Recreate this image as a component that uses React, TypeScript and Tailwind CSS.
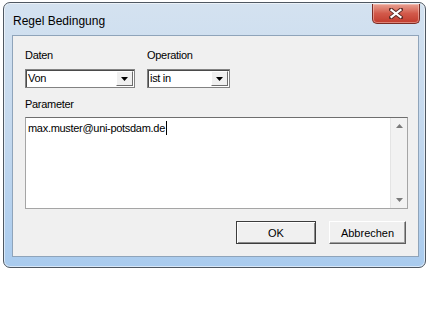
import React from 'react'

const Combo = ({ value, width }: { value: string; width: string }) => {
  return (
    <div className={`${width} h-[19px] flex bg-white border border-[#828282] shadow-[inset_1px_1px_0_#4a4a4a]`}>
      <span className="flex-1 pl-[2px] pt-[1px] text-[11px] leading-[15px] tracking-[-0.3px] text-black">{value}</span>
      <div className="w-[17px] h-[15px] mt-[1px] mr-[1px] flex items-center justify-center bg-[#f0f0f0] border border-t-white border-l-white border-r-[#6d6d6d] border-b-[#6d6d6d]">
        <svg width="7" height="4" viewBox="0 0 7 4">
          <path d="M0 0 H7 L3.5 4 Z" fill="#000" />
        </svg>
      </div>
    </div>
  )
}

const App = () => {
  return (
    <div
      className="w-[430px] h-[323px] bg-white pt-[2px] pl-[3px]"
      style={{ fontFamily: '"Liberation Sans", Arial, sans-serif' }}
    >
      {/* window frame */}
      <div className="w-[423px] h-[266px] rounded-[7px] border border-[#4f5862] bg-gradient-to-b from-[#d4e2f0] via-[#c3d8ee] to-[#a9cbee] shadow-[inset_0_0_0_1px_rgba(255,255,255,0.55)] flex flex-col">
        {/* title bar */}
        <div className="h-[32px] flex items-start justify-between pl-[9px] pr-[5px]">
          <span className="mt-[11px] text-[12px] leading-[14px] text-black">Regel Bedingung</span>
          <div className="w-[48px] h-[20px] mt-[1px] rounded-b-[5px] border border-t-0 border-[#7a2c24] bg-gradient-to-b from-[#e8a193] via-[#d2594a] to-[#c13a2c] shadow-[inset_0_0_0_1px_rgba(255,220,210,0.45)] flex items-center justify-center">
            <svg width="14" height="11" viewBox="0 0 14 11">
              <path d="M2 1.5 L12 9.5 M12 1.5 L2 9.5" stroke="#5a2a25" strokeWidth="4" strokeLinecap="square" />
              <path d="M2.5 2 L11.5 9 M11.5 2 L2.5 9" stroke="#ffffff" strokeWidth="2.2" strokeLinecap="square" />
            </svg>
          </div>
        </div>

        {/* client area */}
        <div className="ml-[8px] mr-[6px] h-[222px] bg-[#f0f0f0] border border-[#8fa4ba] pl-[12px] pr-[10px] pt-[12px] flex flex-col text-[11px] leading-[14px] tracking-[-0.3px] text-black">
          <div className="flex gap-[12px]">
            <div className="flex flex-col gap-[7px]">
              <span>Daten</span>
              <Combo value="Von" width="w-[110px]" />
            </div>
            <div className="flex flex-col gap-[7px]">
              <span>Operation</span>
              <Combo value="ist in" width="w-[83px]" />
            </div>
          </div>

          <span className="mt-[9px]">Parameter</span>

          <div className="mt-[6px] h-[92px] flex bg-white border border-[#a5a5a5] border-t-[#6e6e6e]">
            <div className="flex-1 pl-[2px] pt-[3px] flex items-start">
              <span>max.muster@uni-potsdam.de</span>
              <span className="w-[1px] h-[14px] bg-black ml-[1px]" />
            </div>
            <div className="w-[17px] bg-[#f2f2f2] border-l border-[#e4e4e4] flex flex-col items-center justify-between pt-[6px] pb-[6px]">
              <svg width="7" height="4" viewBox="0 0 7 4">
                <path d="M0 4 H7 L3.5 0 Z" fill="#7a7a7a" />
              </svg>
              <svg width="7" height="4" viewBox="0 0 7 4">
                <path d="M0 0 H7 L3.5 4 Z" fill="#7a7a7a" />
              </svg>
            </div>
          </div>

          <div className="mt-[12px] flex justify-end gap-[13px] pr-[2px] tracking-normal">
            <button className="w-[80px] h-[23px] bg-[#f0f0f0] border border-[#3c3c3c] shadow-[inset_1px_1px_0_#ffffff,inset_-1px_-1px_0_#8a8a8a] text-[11px] text-black">
              OK
            </button>
            <button className="w-[77px] h-[23px] bg-[#f0f0f0] border border-t-white border-l-white border-r-[#5e5e5e] border-b-[#5e5e5e] shadow-[inset_-1px_-1px_0_#a0a0a0] text-[11px] text-black">
              Abbrechen
            </button>
          </div>
        </div>
      </div>
    </div>
  )
}

export default App
